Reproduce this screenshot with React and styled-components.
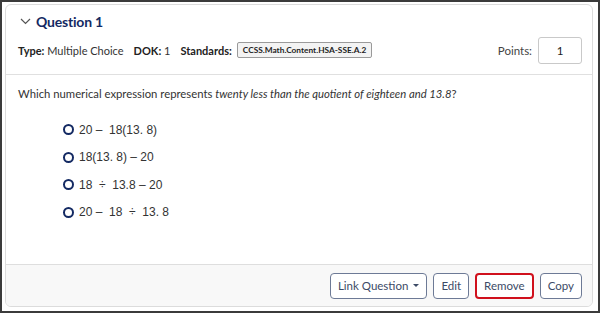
import styled, { createGlobalStyle } from 'styled-components';

const GlobalStyle = createGlobalStyle`
  html, body { margin: 0; padding: 0; background: #fff; }
  body { font-family: Lato, "Open Sans", Arial, sans-serif; }
  * { box-sizing: border-box; }
`;

const options = [
  '20 –  18(13. 8)',
  '18(13. 8) – 20',
  '18  ÷  13.8 – 20',
  '20 –  18  ÷  13. 8',
];

const Chevron = () => (
  <svg width="11" height="7" viewBox="0 0 11 7">
    <path d="M1 1 L5.5 5.5 L10 1" fill="none" stroke="#555" strokeWidth="1.2" />
  </svg>
);

const App = () => {
  return (
    <Frame>
      <GlobalStyle />
      <Card>
        <Header>
          <TitleRow>
            <Chevron />
            <Title>Question 1</Title>
          </TitleRow>
          <MetaRow>
            <Meta><b>Type:</b> Multiple Choice</Meta>
            <Meta><b>DOK:</b> 1</Meta>
            <Meta><b>Standards:</b></Meta>
            <Tag>CCSS.Math.Content.HSA-SSE.A.2</Tag>
            <Points>
              Points:
              <PointsBox>1</PointsBox>
            </Points>
          </MetaRow>
        </Header>
        <Body>
          <Prompt>
            Which numerical expression represents <i>twenty less than the quotient of eighteen and 13.8</i>?
          </Prompt>
          <OptionList>
            {options.map((o) => (
              <Option key={o}>
                <Radio />
                <span>{o}</span>
              </Option>
            ))}
          </OptionList>
        </Body>
        <Footer>
          <Button>Link Question <Caret /></Button>
          <Button>Edit</Button>
          <Button $danger>Remove</Button>
          <Button>Copy</Button>
        </Footer>
      </Card>
    </Frame>
  );
};

const Frame = styled.div`
  width: 600px;
  height: 313px;
  border: 2px solid #3b3b3b;
  background: #fff;
  padding: 2px 5px 4px 3px;
  display: flex;
`;

const Card = styled.div`
  flex: 1;
  display: flex;
  flex-direction: column;
  border: 1px solid #dcdcdc;
  border-radius: 6px;
  overflow: hidden;
  background: #fff;
`;

const Header = styled.div`
  padding: 5px 10px 0 12px;
  height: 70px;
  border-bottom: 1px solid #e0e0e0;
`;

const TitleRow = styled.div`
  display: flex;
  align-items: center;
  gap: 5px;
  padding-left: 2px;
  height: 22px;
`;

const Title = styled.div`
  font-size: 14px;
  font-weight: 700;
  color: #142a63;
  letter-spacing: -0.2px;
`;

const MetaRow = styled.div`
  display: flex;
  align-items: center;
  margin-top: 4px;
  height: 28px;
  font-size: 11px;
  color: #333;
`;

const Meta = styled.span`
  margin-right: 10px;
  b { font-weight: 700; color: #222; }
`;

const Tag = styled.span`
  font-size: 8.3px;
  font-weight: 700;
  color: #222;
  background: #f3f3f3;
  border: 1px solid #9a9a9a;
  border-radius: 2px;
  padding: 2px 5px;
  margin-left: -5px;
`;

const Points = styled.div`
  margin-left: auto;
  display: flex;
  align-items: center;
  gap: 6px;
  font-size: 11.5px;
  color: #444;
`;

const PointsBox = styled.div`
  width: 44px;
  height: 27px;
  border: 1px solid #c9c9c9;
  border-radius: 3px;
  display: flex;
  align-items: center;
  justify-content: center;
  color: #222;
`;

const Body = styled.div`
  flex: 1;
  padding: 12px 12px 0 12px;
`;

const Prompt = styled.div`
  font-size: 11.3px;
  color: #333;
  i { font-style: italic; }
`;

const OptionList = styled.div`
  display: flex;
  flex-direction: column;
  gap: 10px;
  margin-top: 21px;
  padding-left: 45px;
`;

const Option = styled.div`
  display: flex;
  align-items: center;
  gap: 5px;
  height: 17.5px;
  font-family: "Liberation Sans", Arial, sans-serif;
  font-size: 12px;
  color: #333;
  white-space: pre;
`;

const Radio = styled.span`
  width: 11px;
  height: 11px;
  border: 2px solid #142a63;
  border-radius: 50%;
`;

const Footer = styled.div`
  height: 42px;
  border-top: 1px solid #dedede;
  background: #f8f8f8;
  display: flex;
  align-items: center;
  justify-content: flex-end;
  gap: 6px;
  padding-right: 10px;
`;

const Button = styled.button`
  height: 26px;
  padding: 0 7px;
  font-family: Lato, "Open Sans", Arial, sans-serif;
  font-size: 11.5px;
  color: #3c4a66;
  background: #fff;
  border: ${(p) => (p.$danger ? '2px solid #d0101c' : '1px solid #6d7a96')};
  border-radius: 4px;
  display: flex;
  align-items: center;
  gap: 5px;
`;

const Caret = styled.span`
  width: 0;
  height: 0;
  border-left: 3px solid transparent;
  border-right: 3px solid transparent;
  border-top: 3px solid #3c4a66;
`;

export default App;
